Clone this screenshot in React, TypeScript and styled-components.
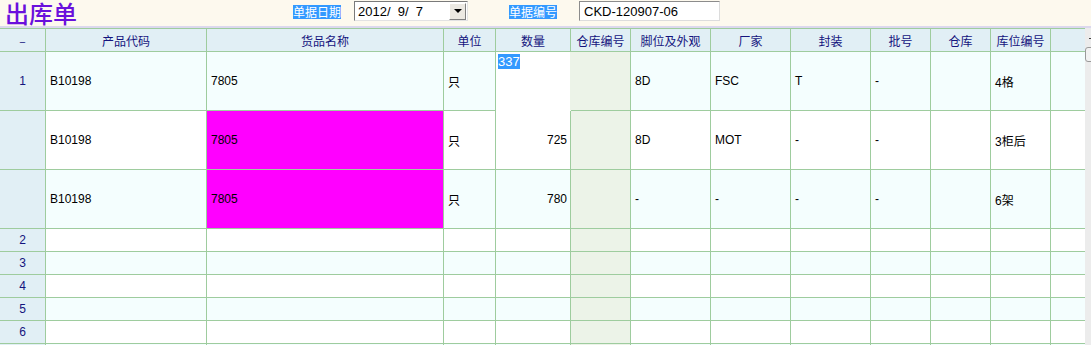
import React from "react";
import styled, { createGlobalStyle } from "styled-components";

const GlobalStyle = createGlobalStyle`
  html, body {
    margin: 0;
    padding: 0;
    background: #fff;
    overflow: hidden;
  }
  body {
    font-family: "Liberation Sans", "Noto Sans CJK SC", sans-serif;
  }
`;

const LINE = "#9ecc9e";
const CYAN = "#f4fefe";
const HEAD_BG = "#e1eff5";
const NAVY = "#14147e";

const Page = styled.div`
  width: 1091px;
  height: 345px;
  overflow: hidden;
  display: flex;
  flex-direction: column;
`;

const TopBar = styled.div`
  flex: 0 0 26px;
  height: 26px;
  background: #fdf9ee;
  border-bottom: 2px solid #dcd8ee;
  display: grid;
  grid-template-columns: 288px 61px 155px 70px 1fr;
  align-items: start;
  padding-left: 5px;
`;

const Title = styled.h1`
  margin: 1px 0 0;
  font: 500 24px/24px "Noto Sans CJK SC", sans-serif;
  color: #6a10dc;
`;

const SelLabel = styled.span`
  justify-self: start;
  margin-top: 5px;
  background: #3399ff;
  color: #fff;
  font: 12px/14px "Noto Sans CJK SC", sans-serif;
`;

const DateSelect = styled.div`
  box-sizing: border-box;
  margin-top: 1px;
  width: 114px;
  height: 20px;
  background: #fff;
  border: 1px solid;
  border-color: #7a7a7a #e2e2e2 #e2e2e2 #7a7a7a;
  display: flex;
  align-items: center;
  justify-content: space-between;
  padding-left: 3px;
  font: 13px "Liberation Sans", sans-serif;
  color: #000;
  white-space: pre;
`;

const DropButton = styled.div`
  box-sizing: border-box;
  width: 17px;
  height: 17px;
  margin-right: 1px;
  background: #ece9e2;
  border: 1px solid;
  border-color: #fff #808080 #808080 #fff;
  display: flex;
  align-items: center;
  justify-content: center;
`;

const Arrow = styled.span`
  width: 0;
  height: 0;
  border-left: 4px solid transparent;
  border-right: 4px solid transparent;
  border-top: 4px solid #000;
`;

const CodeInput = styled.div`
  box-sizing: border-box;
  margin-top: 1px;
  width: 141px;
  height: 20px;
  background: #fff;
  border: 1px solid;
  border-color: #8c8c8c #dcdcdc #dcdcdc #8c8c8c;
  display: flex;
  align-items: center;
  padding-left: 4px;
  font: 13px "Liberation Sans", sans-serif;
  color: #000;
`;

const Main = styled.div`
  display: flex;
  flex: 1;
  min-height: 0;
`;

const COLS = [46, 161, 237, 52, 75, 60, 80, 80, 80, 60, 60, 60, 34];

const Grid = styled.div`
  width: 1085px;
  flex: 0 0 1085px;
  display: grid;
  grid-template-columns: ${COLS.map((c) => `${c}px`).join(" ")};
  align-content: start;
  border-top: 1px solid ${LINE};
`;

const Cell = styled.div<{
  $bg: string;
  $tall?: boolean;
  $right?: boolean;
  $last?: boolean;
}>`
  box-sizing: border-box;
  height: ${(p) => (p.$tall ? 59 : 23)}px;
  background: ${(p) => p.$bg};
  border-right: ${(p) => (p.$last ? "none" : `1px solid ${LINE}`)};
  border-bottom: 1px solid ${LINE};
  display: flex;
  align-items: center;
  justify-content: ${(p) => (p.$right ? "flex-end" : "flex-start")};
  padding: 0 3px 0 4px;
  font: 12px "Liberation Sans", "Noto Sans CJK SC", sans-serif;
  color: #000;
  white-space: nowrap;
  overflow: hidden;
`;

const HeadCell = styled(Cell)`
  justify-content: center;
  padding: 0;
  color: ${NAVY};
  font-family: "Noto Sans CJK SC", sans-serif;
`;

const RowLabel = styled(Cell)`
  justify-content: center;
  padding: 0;
  color: ${NAVY};
`;

const EditCell = styled(Cell)`
  align-items: flex-start;
  padding: 2px 0 0 2px;
  border-right-color: #ecf3e8;
  border-bottom-color: #fff;
`;

const Selected = styled.span`
  background: #3399ff;
  color: #fff;
  font-size: 13px;
  line-height: 15px;
`;

const ScrollStrip = styled.div`
  flex: 0 0 6px;
  background: #ececec;
  overflow: hidden;
  display: flex;
  flex-direction: column;
`;

const UpMark = styled.div`
  margin: 10px 0 0 4px;
  width: 3px;
  height: 1px;
  background: #444;
`;

const Thumb = styled.div`
  margin-top: 8px;
  width: 12px;
  height: 15px;
  box-sizing: border-box;
  border: 1px solid #9a9a9a;
  border-radius: 3px;
  background: #f2f2f2;
`;

const headers = [
  "–",
  "产品代码",
  "货品名称",
  "单位",
  "数量",
  "仓库编号",
  "脚位及外观",
  "厂家",
  "封装",
  "批号",
  "仓库",
  "库位编号",
  "",
];

interface Row {
  label: string;
  tall: boolean;
  cells: string[];
  magenta?: boolean;
  editing?: string;
}

const empty = () => Array(12).fill("");

const rows: Row[] = [
  {
    label: "1",
    tall: true,
    cells: ["B10198", "7805", "只", "", "", "8D", "FSC", "T", "-", "", "4格", ""],
    editing: "337",
  },
  {
    label: "",
    tall: true,
    magenta: true,
    cells: ["B10198", "7805", "只", "725", "", "8D", "MOT", "-", "-", "", "3柜后", ""],
  },
  {
    label: "",
    tall: true,
    magenta: true,
    cells: ["B10198", "7805", "只", "780", "", "-", "-", "-", "-", "", "6架", ""],
  },
  ...["2", "3", "4", "5", "6", ""].map((l) => ({
    label: l,
    tall: false,
    cells: empty(),
  })),
];

const cellBg = (row: Row, rowIdx: number, col: number) => {
  if (col === 1 && row.magenta) return "#ff00ff";
  if (col === 4) return "#ecf3e8";
  return rowIdx % 2 === 0 ? CYAN : "#fff";
};

export default function App() {
  return (
    <Page>
      <GlobalStyle />
      <TopBar>
        <Title>出库单</Title>
        <SelLabel>单据日期</SelLabel>
        <DateSelect>
          <span>2012/  9/  7</span>
          <DropButton>
            <Arrow />
          </DropButton>
        </DateSelect>
        <SelLabel>单据编号</SelLabel>
        <CodeInput>CKD-120907-06</CodeInput>
      </TopBar>
      <Main>
        <Grid>
          {headers.map((h, i) => (
            <HeadCell key={`h${i}`} $bg={HEAD_BG} $last={i === 12}>
              {h}
            </HeadCell>
          ))}
          {rows.map((row, r) => (
            <React.Fragment key={`r${r}`}>
              <RowLabel $bg={HEAD_BG} $tall={row.tall}>
                {row.label}
              </RowLabel>
              {row.cells.map((text, c) =>
                c === 3 && row.editing ? (
                  <EditCell key={c} $bg="#fff" $tall={row.tall}>
                    <Selected>{row.editing}</Selected>
                  </EditCell>
                ) : (
                  <Cell
                    key={c}
                    $bg={cellBg(row, r, c)}
                    $tall={row.tall}
                    $right={c === 3}
                    $last={c === 11}
                  >
                    {text}
                  </Cell>
                )
              )}
            </React.Fragment>
          ))}
        </Grid>
        <ScrollStrip>
          <UpMark />
          <Thumb />
        </ScrollStrip>
      </Main>
    </Page>
  );
}
